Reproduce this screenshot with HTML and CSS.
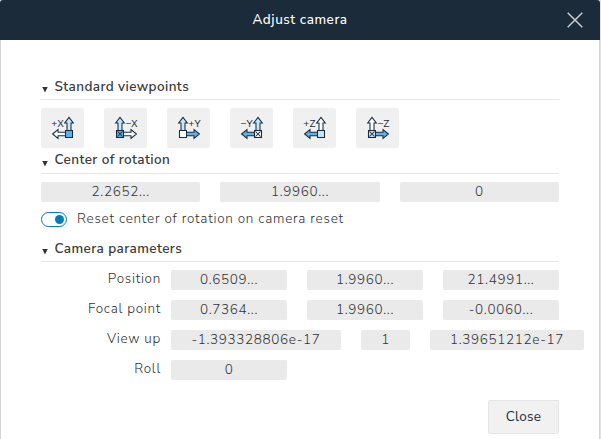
FILE: index.html
```html
<!DOCTYPE html>
<html lang="en">
<head>
<meta charset="utf-8">
<title>Adjust camera</title>
<link rel="stylesheet" href="styles.css">
</head>
<body>
<svg class="defs" width="0" height="0">
  <defs>
    <path id="up" d="M28 9.4 L32.3 15 H30 V23 H26 V15 H23.7 Z"/>
    <path id="side" d="M11.6 26 L17 21.7 V24.2 H25 V27.8 H17 V30.3 Z"/>
    <rect id="box" x="24.5" y="22.5" width="7" height="7"/>
    <path id="cross" d="M25.5 23.5 L30.5 28.5 M30.5 23.5 L25.5 28.5"/>
  </defs>
</svg>
<div class="dialog">
  <header class="header">
    <h1 class="title">Adjust camera</h1>
    <svg class="dismiss" width="16" height="16" viewBox="0 0 16 16"><path d="M.7 .7 L15.3 15.3 M15.3 .7 L.7 15.3"/></svg>
  </header>
  <main class="content">
    <h2 class="section first"><span class="caret"></span><span>Standard viewpoints</span></h2>
    <div class="views">
      <button class="view"><svg width="43" height="40"><g><use href="#up" class="light"/><use href="#side" class="white"/><use href="#box" class="blue"/></g><text x="10.3" y="18.7" textLength="12.3" lengthAdjust="spacingAndGlyphs">+X</text></svg></button>
      <button class="view"><svg width="43" height="40"><g class="flip"><use href="#up" class="light"/><use href="#side" class="white"/><use href="#box" class="blue"/><use href="#cross"/></g><text x="21.2" y="18.7" textLength="12.3" lengthAdjust="spacingAndGlyphs">−X</text></svg></button>
      <button class="view"><svg width="43" height="40"><g class="flip"><use href="#up" class="light"/><use href="#side" class="blue"/><use href="#box" class="white"/></g><text x="21.2" y="18.7" textLength="12.3" lengthAdjust="spacingAndGlyphs">+Y</text></svg></button>
      <button class="view"><svg width="43" height="40"><g><use href="#up" class="light"/><use href="#side" class="blue"/><use href="#box" class="white"/><use href="#cross"/></g><text x="10.3" y="18.7" textLength="12.3" lengthAdjust="spacingAndGlyphs">−Y</text></svg></button>
      <button class="view"><svg width="43" height="40"><g><use href="#up" class="white"/><use href="#side" class="blue"/><use href="#box" class="light"/></g><text x="10.3" y="18.7" textLength="12.3" lengthAdjust="spacingAndGlyphs">+Z</text></svg></button>
      <button class="view"><svg width="43" height="40"><g class="flip"><use href="#up" class="white"/><use href="#side" class="blue"/><use href="#box" class="light"/><use href="#cross"/></g><text x="21.2" y="18.7" textLength="12.3" lengthAdjust="spacingAndGlyphs">−Z</text></svg></button>
    </div>
    <h2 class="section second"><span class="caret"></span><span>Center of rotation</span></h2>
    <div class="center">
      <div class="field">2.2652...</div><div class="field">1.9960...</div><div class="field">0</div>
    </div>
    <div class="toggle"><span class="switch"></span><span class="toggle-label">Reset center of rotation on camera reset</span></div>
    <h2 class="section third"><span class="caret"></span><span>Camera parameters</span></h2>
    <div class="params">
      <div class="row"><span class="label">Position</span><div class="field">0.6509...</div><div class="field">1.9960...</div><div class="field">21.4991...</div></div>
      <div class="row"><span class="label">Focal point</span><div class="field">0.7364...</div><div class="field">1.9960...</div><div class="field">-0.0060...</div></div>
      <div class="row"><span class="label">View up</span><div class="field wide">-1.393328806e-17</div><div class="field narrow">1</div><div class="field medium">1.39651212e-17</div></div>
      <div class="row"><span class="label">Roll</span><div class="field">0</div></div>
    </div>
    <footer class="footer"><button class="close">Close</button></footer>
  </main>
</div>
</body>
</html>
```
FILE: styles.css
```css
* { box-sizing: border-box; }
body {
  margin: 0;
  background: #e2e2e2;
  font-family: "Nunito Sans", Nunito, "Open Sans", sans-serif;
  font-size: 13.5px;
  font-weight: 300;
  color: #333;
  overflow: hidden;
}
.defs { display: block; }
.dialog { width: 600px; height: 439px; }
.header {
  height: 40px;
  display: grid;
  grid-template-columns: 1fr auto 1fr;
  align-items: center;
  background: #1c2b39;
  border-radius: 3px 3px 0 0;
}
.title {
  grid-column: 2;
  margin: 0;
  font-size: 13.5px;
  font-weight: 500;
  line-height: 38px;
  padding-bottom: 1px;
  letter-spacing: .57px;
  color: #fff;
}
.dismiss {
  justify-self: end;
  margin-right: 17px;
  fill: none;
  stroke: #c8cbce;
  stroke-width: 1.5;
}
.content {
  height: 399px;
  padding: 36px 40px 0;
  background: #fff;
  border: solid #d6d6d6;
  border-width: 0 1px;
}
.section {
  display: flex;
  align-items: center;
  gap: 6.5px;
  height: 24px;
  margin: 0;
  padding-left: 1px;
  border-bottom: 1px solid #e6e6e6;
  font-size: 13.5px;
  font-weight: 600;
  line-height: 20px;
  letter-spacing: .4px;
  color: #3c3c3c;
}
.section > span:last-child { margin-top: -2px; }
.second > span:last-child { margin-top: -4px; }
.caret {
  width: 6px;
  height: 6px;
  margin-top: 4px;
  background: #333;
  clip-path: polygon(0 0, 100% 0, 50% 100%);
}
.views { display: flex; gap: 20px; margin-top: 8px; }
.view {
  width: 43px;
  height: 40px;
  padding: 0;
  border: 0;
  border-radius: 2px;
  background: #f0f0f0;
}
.view svg { display: block; stroke: #1c2c3a; stroke-width: 1.05; fill: none; }
.view text {
  font: 400 9.2px "Open Sans", sans-serif;
  fill: #1c2c3a;
  stroke: none;
}
.flip { transform: translateX(44px) scaleX(-1); }
.light { fill: #c5e7ff; }
.blue { fill: #58b4f0; }
.white { fill: #fff; }
.second { margin-top: 2px; }
.center { display: grid; grid-template-columns: repeat(3, 1fr); gap: 20px; margin-top: 8px; }
.field {
  height: 20px;
  border-radius: 2px;
  background: #eaeaea;
  line-height: 20px;
  letter-spacing: .65px;
  text-align: center;
  white-space: nowrap;
}
.toggle { display: flex; align-items: center; gap: 10px; height: 16px; margin-top: 9px; }
.switch {
  display: flex;
  align-items: center;
  justify-content: flex-end;
  width: 26px;
  height: 15px;
  padding-right: 2px;
  border: 1px solid #007cba;
  border-radius: 8px;
}
.switch::after { content: ""; width: 9px; height: 9px; border-radius: 50%; background: #007cba; }
.toggle-label { margin-top: -2px; letter-spacing: .75px; }
.third { margin-top: 11px; }
.params { display: flex; flex-direction: column; gap: 10px; margin-top: 8px; }
.row { display: flex; gap: 20px; height: 20px; }
.label {
  flex: none;
  width: 120px;
  margin-right: -10px;
  line-height: 18px;
  letter-spacing: .72px;
  text-align: right;
}
.row .field { flex: none; width: 116px; }
.row .wide { width: 170px; }
.row .narrow { width: 49px; }
.row .medium { width: 154px; }
.footer { display: flex; justify-content: flex-end; margin-top: 20px; }
.close {
  width: 71px;
  height: 34px;
  padding: 0;
  border: 1px solid #e6e6e6;
  border-radius: 2px;
  background: #f1f1f1;
  color: #1c2b39;
  font: 400 13.5px/30px "Nunito Sans", "Open Sans", sans-serif;
  letter-spacing: .3px;
}
```
